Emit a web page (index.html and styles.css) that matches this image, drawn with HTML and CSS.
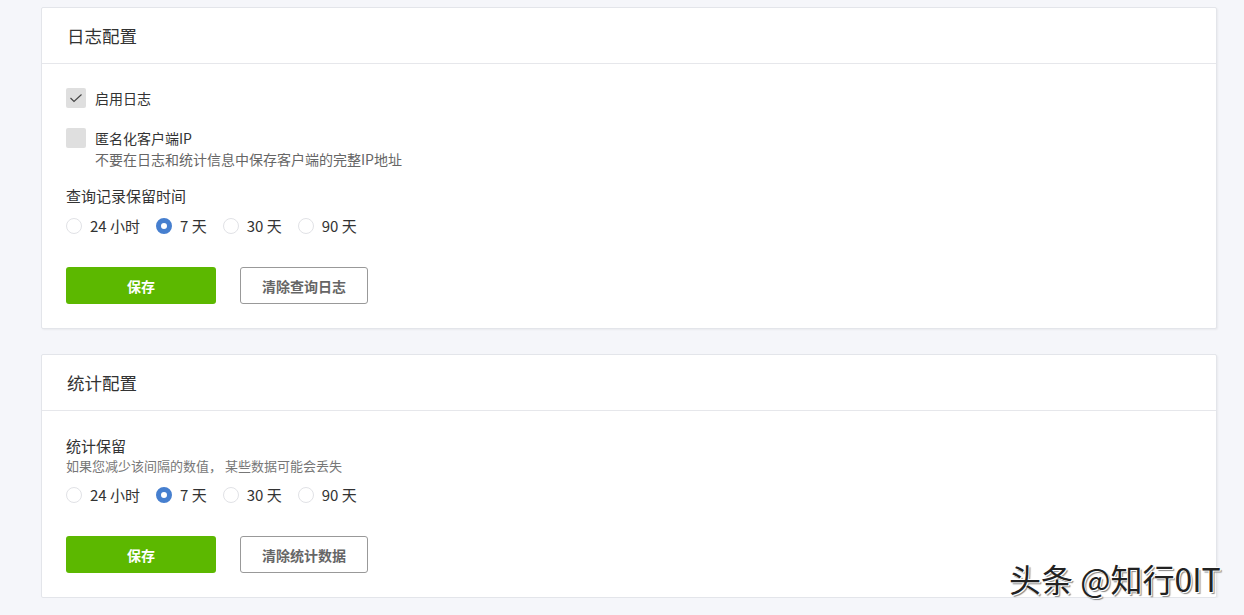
FILE: index.html
```html
<!DOCTYPE html>
<html lang="zh">
<head>
<meta charset="utf-8">
<link rel="stylesheet" href="styles.css">
</head>
<body>
<div class="page">
  <section class="card">
    <div class="card-header">日志配置</div>
    <div class="card-body">
      <label class="check">
        <span class="box checked"><svg width="14" height="14" viewBox="0 0 14 14"><path d="M1.5 7 L5 10.5 L12.5 3.5" fill="none" stroke="#444" stroke-width="1.1"/></svg></span>
        <span class="check-text"><span class="label">启用日志</span></span>
      </label>
      <label class="check second">
        <span class="box"></span>
        <span class="check-text">
          <span class="label">匿名化客户端IP</span>
          <span class="hint">不要在日志和统计信息中保存客户端的完整IP地址</span>
        </span>
      </label>
      <div class="field-title first-title">查询记录保留时间</div>
      <div class="radios">
        <span class="radio"><span class="dot"></span>24 小时</span>
        <span class="radio"><span class="dot on"></span>7 天</span>
        <span class="radio"><span class="dot"></span>30 天</span>
        <span class="radio"><span class="dot"></span>90 天</span>
      </div>
      <div class="actions">
        <button class="btn save">保存</button>
        <button class="btn clear">清除查询日志</button>
      </div>
    </div>
  </section>
  <section class="card">
    <div class="card-header">统计配置</div>
    <div class="card-body body2">
      <div class="field-title">统计保留</div>
      <div class="small-hint">如果您减少该间隔的数值， 某些数据可能会丢失</div>
      <div class="radios">
        <span class="radio"><span class="dot"></span>24 小时</span>
        <span class="radio"><span class="dot on"></span>7 天</span>
        <span class="radio"><span class="dot"></span>30 天</span>
        <span class="radio"><span class="dot"></span>90 天</span>
      </div>
      <div class="actions">
        <button class="btn save">保存</button>
        <button class="btn clear">清除统计数据</button>
      </div>
    </div>
  </section>
</div>
<div class="watermark">头条 @知行0IT</div>
</body>
</html>
```
FILE: styles.css
```css
html, body {
  margin: 0;
  padding: 0;
  background: #f5f6fa;
  font-family: "Noto Sans CJK SC", "Noto Sans", sans-serif;
  color: #333;
}
.page {
  padding: 7px 27px 0 41px;
  display: flex;
  flex-direction: column;
  gap: 25px;
}
.card {
  background: #fff;
  border: 1px solid #e3e5ea;
  border-radius: 2px;
  box-shadow: 1px 1px 2px rgba(0,0,0,0.05);
}
.card-header {
  height: 55px;
  line-height: 55px;
  padding-left: 25px;
  font-size: 17.5px;
  border-bottom: 1px solid #e6e7eb;
  color: #333;
}
.card-body {
  padding: 24px 24px 24px 24px;
}
.body2 {
  padding-top: 25px;
}
.check {
  display: flex;
  align-items: flex-start;
  gap: 9px;
}
.check.second {
  margin-top: 20px;
}
.box {
  width: 20px;
  height: 20px;
  border-radius: 2px;
  background: #dfdfdf;
  display: flex;
  align-items: center;
  justify-content: center;
  flex: none;
}
.check-text {
  display: flex;
  flex-direction: column;
}
.label {
  font-size: 14px;
  line-height: 20px;
}
.hint {
  font-size: 14px;
  line-height: 22px;
  color: #666;
}
.field-title {
  font-size: 15px;
  line-height: 20px;
}
.first-title {
  margin-top: 16px;
}
.small-hint {
  font-size: 13px;
  line-height: 20px;
  color: #777;
}
.radios {
  display: flex;
  gap: 16px;
  margin-top: 10px;
  font-size: 15px;
  line-height: 20px;
}
.body2 .radios {
  margin-top: 9px;
}
.radio {
  display: flex;
  align-items: center;
  gap: 8px;
}
.dot {
  width: 14px;
  height: 14px;
  border: 1px solid #e1e2e6;
  border-radius: 50%;
  background: #fff;
  box-sizing: content-box;
}
.dot.on {
  background: #fff;
  border: 5px solid #467fcf;
  width: 6px;
  height: 6px;
}
.actions {
  display: flex;
  gap: 24px;
  margin-top: 31px;
}
.btn {
  height: 37px;
  border-radius: 3px;
  font-family: "Noto Sans CJK SC", sans-serif;
  font-size: 14px;
  font-weight: bold;
  cursor: pointer;
}
.save {
  width: 150px;
  background: #5cb800;
  border: none;
  color: #fff;
}
.clear {
  width: 128px;
  background: #fff;
  border: 1px solid #999;
  color: #666;
}
.watermark {
  position: absolute;
  left: 1009px;
  top: 557px;
  font-size: 32px;
  line-height: 42px;
  color: #222;
  font-family: "Noto Sans CJK SC", sans-serif;
  text-shadow: 1px 1px 0 #fff, -1px -1px 0 #fff, 2px 2px 1px #888;
  white-space: nowrap;
}
```
